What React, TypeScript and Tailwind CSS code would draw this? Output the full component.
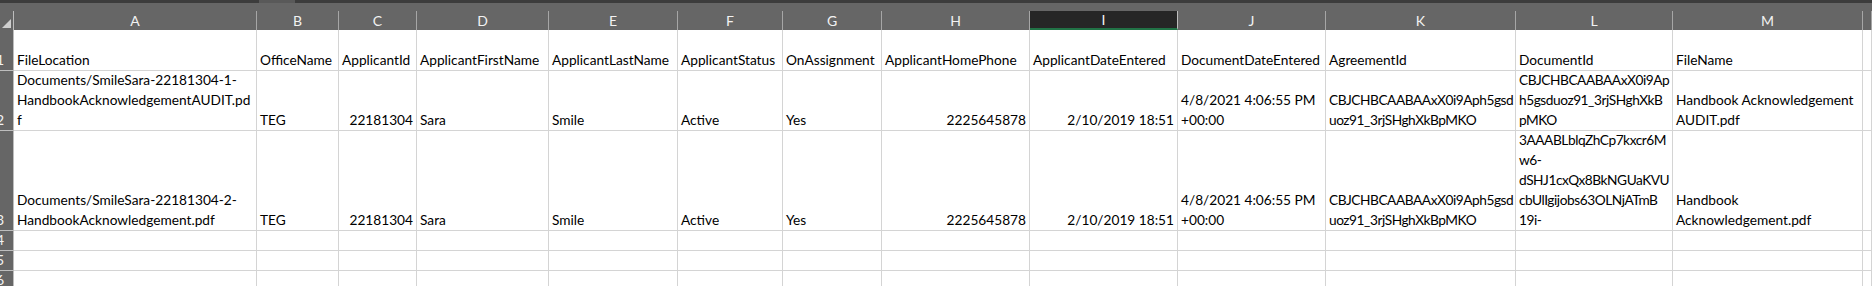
import React from 'react';

type Cell = { lines: string[]; right?: boolean; tight?: boolean };

const GRID = 'grid grid-cols-[14px_243px_82px_78px_132px_129px_105px_99px_148px_148px_148px_190px_157px_190px_1fr]';

const LETTERS = ['A', 'B', 'C', 'D', 'E', 'F', 'G', 'H', 'I', 'J', 'K', 'L', 'M', ''];

const t = (s: string): Cell => ({ lines: [s] });
const n = (s: string): Cell => ({ lines: [s], right: true });
const m = (...lines: string[]): Cell => ({ lines });
// ids use lots of capitals, squeeze them a little so they fit like in the sheet
const id = (...lines: string[]): Cell => ({ lines, tight: true });

const ROWS: { num: string; h: string; cells: Cell[] }[] = [
  {
    num: '1',
    h: 'h-[41px]',
    cells: [
      t('FileLocation'), t('OfficeName'), t('ApplicantId'), t('ApplicantFirstName'), t('ApplicantLastName'),
      t('ApplicantStatus'), t('OnAssignment'), t('ApplicantHomePhone'), t('ApplicantDateEntered'),
      t('DocumentDateEntered'), t('AgreementId'), t('DocumentId'), t('FileName'), t(''),
    ],
  },
  {
    num: '2',
    h: 'h-[60px]',
    cells: [
      m('Documents/SmileSara-22181304-1-', 'HandbookAcknowledgementAUDIT.pd', 'f'),
      t('TEG'), n('22181304'), t('Sara'), t('Smile'), t('Active'), t('Yes'),
      n('2225645878'), n('2/10/2019 18:51'),
      m('4/8/2021 4:06:55 PM', '+00:00'),
      id('CBJCHBCAABAAxX0i9Aph5gsd', 'uoz91_3rjSHghXkBpMKO'),
      id('CBJCHBCAABAAxX0i9Ap', 'h5gsduoz91_3rjSHghXkB', 'pMKO'),
      m('Handbook Acknowledgement', 'AUDIT.pdf'),
      t(''),
    ],
  },
  {
    num: '3',
    h: 'h-[100px]',
    cells: [
      m('Documents/SmileSara-22181304-2-', 'HandbookAcknowledgement.pdf'),
      t('TEG'), n('22181304'), t('Sara'), t('Smile'), t('Active'), t('Yes'),
      n('2225645878'), n('2/10/2019 18:51'),
      m('4/8/2021 4:06:55 PM', '+00:00'),
      id('CBJCHBCAABAAxX0i9Aph5gsd', 'uoz91_3rjSHghXkBpMKO'),
      id('3AAABLblqZhCp7kxcr6M', 'w6-', 'dSHJ1cxQx8BkNGUaKVU', 'cbUlIgijobs63OLNjATmB', '19i-'),
      m('Handbook', 'Acknowledgement.pdf'),
      t(''),
    ],
  },
  { num: '4', h: 'h-[20px]', cells: Array.from({ length: 14 }, () => t('')) },
  { num: '5', h: 'h-[20px]', cells: Array.from({ length: 14 }, () => t('')) },
  { num: '6', h: 'h-[20px]', cells: Array.from({ length: 14 }, () => t('')) },
];

const RowHead: React.FC<{ num: string }> = ({ num }) => (
  <div className="bg-[#666666] border-r border-b border-[#bdbdbd] overflow-hidden flex items-end justify-end pr-[9px]">
    <span className="leading-[20px] text-[14px] text-[#f2f2f2]">{num}</span>
  </div>
);

const DataCell: React.FC<{ cell: Cell }> = ({ cell }) => (
  <div className={`border-r border-b border-[#d4d4d4] overflow-hidden flex flex-col justify-end px-[3px] ${cell.right ? 'items-end' : 'items-start'}`}>
    {cell.lines.map((line, i) => (
      <div
        key={i}
        className={`leading-[20px] h-[20px] shrink-0 whitespace-nowrap text-[13.7px] text-black ${cell.tight ? 'tracking-[-0.45px]' : ''}`}
      >
        {line}
      </div>
    ))}
  </div>
);

export default function App() {
  return (
    <div className="w-[1872px] h-[286px] overflow-hidden bg-white font-['Lato','Liberation_Sans',sans-serif]">
      {/* ribbon edge */}
      <div className="h-[3px] flex bg-[#3c3c3c]">
        <div className="w-[259px]" />
        <div className="w-[36px] bg-[#595959]" />
      </div>

      {/* column letters */}
      <div className={`${GRID} h-[27px] bg-[#666666]`}>
        <div className="flex flex-col justify-end">
          <div className="h-[19px] border-r border-[#bdbdbd] relative">
            <div className="absolute left-[2px] bottom-[2px] w-0 h-0 border-l-[9px] border-l-transparent border-b-[9px] border-b-[#cfcfcf]" />
          </div>
        </div>
        {LETTERS.map((l, i) =>
          l === 'I' ? (
            <div key={i} className="flex flex-col justify-end">
              <div className="h-[19px] bg-[#262626] border-r border-[#bdbdbd] border-b-2 border-b-[#217346] flex items-center justify-center text-[14px] text-[#f2f2f2]">
                {l}
              </div>
            </div>
          ) : (
            <div key={i} className="flex flex-col justify-end">
              <div className="h-[19px] border-r border-[#a6a6a6] flex items-center justify-center text-[14px] text-[#f2f2f2]">
                {l}
              </div>
            </div>
          )
        )}
      </div>

      {/* sheet rows */}
      {ROWS.map(row => (
        <div key={row.num} className={`${GRID} ${row.h}`}>
          <RowHead num={row.num} />
          {row.cells.map((c, i) => (
            <DataCell key={i} cell={c} />
          ))}
        </div>
      ))}
    </div>
  );
}
